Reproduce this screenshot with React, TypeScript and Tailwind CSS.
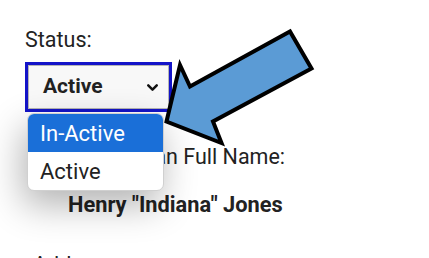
import { ChevronDown } from "lucide-react";

// Callout arrow pointing at the open dropdown
function CalloutArrow() {
  return (
    <svg
      className="absolute left-0 top-0 pointer-events-none"
      width="429"
      height="258"
      viewBox="0 0 429 258"
    >
      <polygon
        points="166.5,121.5 180,65 190,86.5 290,31.5 311.5,68.5 213,121.5 221.5,143"
        fill="#5b9bd5"
        stroke="#000"
        strokeWidth="4"
        strokeLinejoin="miter"
      />
    </svg>
  );
}

export default function App() {
  return (
    <div
      className="relative w-[429px] h-[258px] overflow-hidden bg-white text-[#222]"
      style={{ fontFamily: "Roboto, 'Liberation Sans', sans-serif" }}
    >
      <div className="flex flex-col pl-[25px] pt-[27px]">
        <label className="text-[21.5px] leading-[26px]">Status:</label>

        {/* Select with focus ring */}
        <div className="relative mt-[9px] w-[147px] h-[50px] border-[3px] border-[#1414c8]">
          <div className="flex h-full items-center justify-between border border-[#b5b5b5] bg-[#f8f8f8] pl-[14px] pr-[7px]">
            <span className="text-[21px] font-bold">Active</span>
            <ChevronDown size={17} strokeWidth={3.5} className="text-[#111]" />
          </div>
        </div>

        <div className="pt-[32px] text-[21.5px] leading-[26px] whitespace-nowrap">
          <span className="pl-[56px]">Custodian Full Name:</span>
        </div>
        <div className="pt-[22px] pl-[43px] text-[21.8px] leading-[26px] font-bold whitespace-nowrap">
          Henry "Indiana" Jones
        </div>
        <div className="pt-[34px] pl-[8px] text-[21.5px] leading-[26px]">Address:</div>
      </div>

      {/* Open dropdown list */}
      <div className="absolute left-[27px] top-[113px] w-[137px] overflow-hidden rounded-[7px] border border-[#d0d0d0] bg-white shadow-[-4px_14px_36px_rgba(0,0,0,0.3)]">
        <div className="h-[38px] flex items-center pl-[12px] bg-[#1a6fd8] text-white text-[22px]">
          In-Active
        </div>
        <div className="h-[38px] flex items-center pl-[12px] text-[22px] text-[#222]">
          Active
        </div>
      </div>

      <CalloutArrow />
    </div>
  );
}
